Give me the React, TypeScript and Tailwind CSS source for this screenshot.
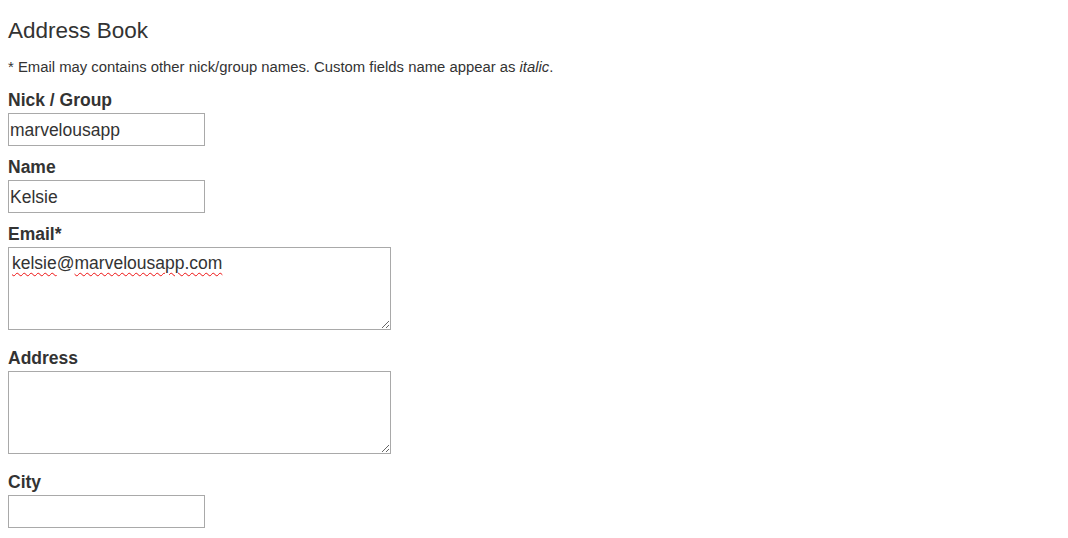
import React from "react";

type FieldProps = {
  label: string;
  value?: string;
  multiline?: boolean;
};

function Field({ label, value = "", multiline }: FieldProps) {
  return (
    <div className={multiline ? "mb-[17px]" : "mb-[10px]"}>
      <label className="block text-[17.5px] leading-[22px] font-bold text-[#333]">
        {label}
      </label>
      {multiline ? (
        <textarea
          defaultValue={value}
          spellCheck={false}
          className="block mt-[2px] w-[383px] h-[83px] border border-[#a9a9a9] bg-white px-[3px] pt-[4px] text-[17.5px] leading-[22px] text-[#333] resize outline-none"
        />
      ) : (
        <input
          defaultValue={value}
          spellCheck={false}
          className="block mt-[2px] w-[197px] h-[33px] border border-[#a9a9a9] bg-white px-[1px] pt-[1px] text-[17.5px] text-[#333] outline-none"
        />
      )}
    </div>
  );
}

export default function App() {
  return (
    <div className="min-h-screen bg-white px-2 font-['Liberation_Sans',Arial,sans-serif] text-[#333]">
      {/* TITLE */}
      <h1 className="pt-[18px] text-[22.5px] leading-[25px] font-normal">
        Address Book
      </h1>

      <p className="mt-[14px] text-[14.85px] leading-[20px]">
        * Email may contains other nick/group names. Custom fields name appear as{" "}
        <i>italic</i>.
      </p>

      {/* FORM */}
      <div className="mt-[12px]">
        <Field label="Nick / Group" value="marvelousapp" />
        <Field label="Name" value="Kelsie" />

        {/* EMAIL with spell-check squiggles */}
        <div className="mb-[17px]">
          <label className="block text-[17.5px] leading-[22px] font-bold text-[#333]">
            Email*
          </label>
          <div className="relative mt-[2px] w-[383px]">
            <textarea
              defaultValue="kelsie@marvelousapp.com"
              spellCheck={false}
              className="block w-[383px] h-[83px] border border-[#a9a9a9] bg-white px-[3px] pt-[4px] text-[17.5px] leading-[22px] text-[#333] resize outline-none"
            />
            <div className="pointer-events-none absolute left-[4px] top-[5px] text-[17.5px] leading-[22px] text-transparent">
              <span className="underline decoration-wavy decoration-[#e11] decoration-1 underline-offset-[3px]">
                kelsie
              </span>
              @
              <span className="underline decoration-wavy decoration-[#e11] decoration-1 underline-offset-[3px]">
                marvelousapp.com
              </span>
            </div>
          </div>
        </div>

        <Field label="Address" multiline />
        <Field label="City" />
      </div>
    </div>
  );
}
